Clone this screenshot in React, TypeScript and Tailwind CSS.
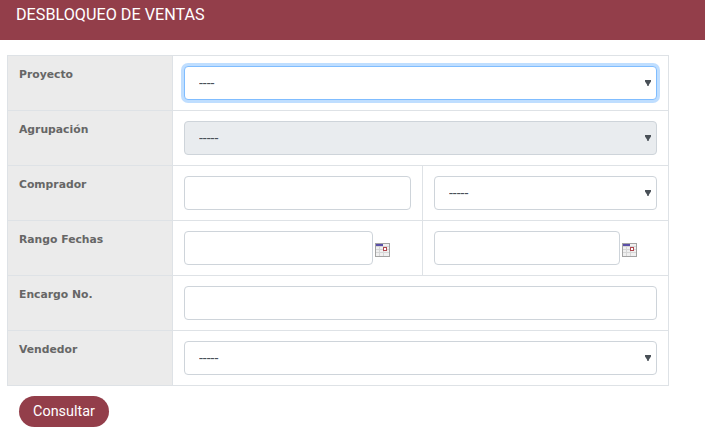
const labelCell = 'w-[165px] border border-[#dee2e6] bg-[#ebebeb] pl-[11px] pt-[11px] align-top text-[10.8px] font-bold text-[#666666] [font-family:"DejaVu_Sans",sans-serif]'
const fieldCell = 'border border-[#dee2e6] px-[11px] pt-[10px] pb-[10px] align-top'
const selectBase = 'block h-[34px] w-full appearance-none rounded border pl-[14px] pr-5 text-[14px] text-[#495057]'
const inputBase = 'block h-[34px] rounded border border-[#ced4da] bg-white'

function CalendarIcon() {
  return (
    <svg width="15" height="14" viewBox="0 0 15 14" className="ml-[2px] mt-[12px] shrink-0">
      <rect x="0" y="0" width="15" height="14" fill="#a3a3a3" />
      <rect x="1" y="1" width="13" height="12" fill="#f0f0f0" />
      <rect x="1" y="1" width="7" height="2" fill="#5a4fa8" />
      <path d="M1 3.5h13M1 6.5h13M1 9.5h13M4.5 4v9M8.5 4v9" stroke="#d6d6d6" strokeWidth="1" />
      <rect x="8.5" y="4.5" width="3" height="3" fill="#fff" stroke="#b0474f" />
    </svg>
  )
}

function Select({ n, className, disabled }: { n: number; className: string; disabled?: boolean }) {
  return (
    <div className="relative">
      <select disabled={disabled} className={`${selectBase} ${className}`}>
        <option>{'-'.repeat(n)}</option>
      </select>
      <svg width="6" height="6" viewBox="0 0 6 6" className="pointer-events-none absolute right-[6px] top-[14px]">
        <path d="M0 0h6v1.5L4 4.5 3.6 6H2.4L2 4.5 0 1.5z" fill="#495057" />
      </svg>
    </div>
  )
}

export default function App() {
  return (
    <div className="h-[440px] w-[705px] overflow-hidden bg-white [font-family:Roboto,sans-serif]">
      <div className="h-10 bg-[#933e4a] pl-4 pt-[5px] text-[16.2px] leading-5 text-white">DESBLOQUEO DE VENTAS</div>

      <div className="ml-[7px] mt-[15px] w-[662px]">
        <table className="w-full table-fixed border-collapse">
          <colgroup>
            <col className="w-[165px]" />
            <col className="w-[250px]" />
            <col />
          </colgroup>
          <tbody>
            <tr>
              <td className={labelCell}>Proyecto</td>
              <td colSpan={2} className={fieldCell}>
                <Select n={4} className="border-[#80bdff] bg-white shadow-[0_0_0_3px_rgba(0,123,255,0.25)] outline-none" />
              </td>
            </tr>
            <tr>
              <td className={labelCell}>Agrupación</td>
              <td colSpan={2} className={fieldCell}>
                <Select n={5} disabled className="border-[#ced4da] bg-[#e9ecef]" />
              </td>
            </tr>
            <tr>
              <td className={labelCell}>Comprador</td>
              <td className={fieldCell}>
                <input className={`${inputBase} w-full`} />
              </td>
              <td className={fieldCell}>
                <Select n={5} className="border-[#ced4da] bg-white" />
              </td>
            </tr>
            <tr>
              <td className={labelCell}>Rango Fechas</td>
              <td className={fieldCell}>
                <div className="flex">
                  <input className={`${inputBase} w-[189px]`} />
                  <CalendarIcon />
                </div>
              </td>
              <td className={fieldCell}>
                <div className="flex">
                  <input className={`${inputBase} w-[186px]`} />
                  <CalendarIcon />
                </div>
              </td>
            </tr>
            <tr>
              <td className={labelCell}>Encargo No.</td>
              <td colSpan={2} className={fieldCell}>
                <input className={`${inputBase} w-full`} />
              </td>
            </tr>
            <tr>
              <td className={labelCell}>Vendedor</td>
              <td colSpan={2} className={fieldCell}>
                <Select n={5} className="border-[#ced4da] bg-white" />
              </td>
            </tr>
          </tbody>
        </table>
      </div>

      <button className="ml-[19px] mt-[10px] h-[31px] w-[90px] rounded-full bg-[#933e4a] text-[14.4px] text-white">Consultar</button>
    </div>
  )
}
